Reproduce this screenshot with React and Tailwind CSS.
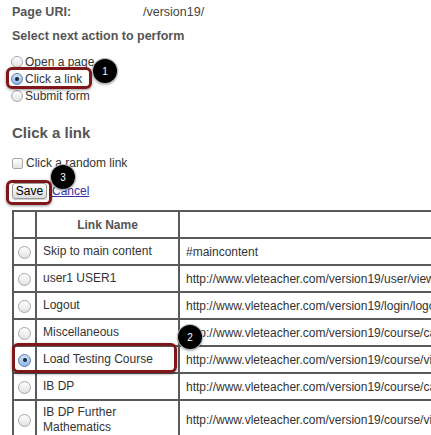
import React from "react";

const ROWS = [
  { name: "Skip to main content", url: "#maincontent" },
  { name: "user1 USER1", url: "http://www.vleteacher.com/version19/user/view.php?id=2" },
  { name: "Logout", url: "http://www.vleteacher.com/version19/login/logout.php" },
  { name: "Miscellaneous", url: "http://www.vleteacher.com/version19/course/category.php" },
  { name: "Load Testing Course", url: "http://www.vleteacher.com/version19/course/view.php", checked: true },
  { name: "IB DP", url: "http://www.vleteacher.com/version19/course/category.php" },
  { name: "IB DP Further Mathematics", url: "http://www.vleteacher.com/version19/course/view.php", tall: true },
];

function Radio({ checked, big }) {
  return (
    <span
      className={
        "inline-flex items-center justify-center rounded-full border shrink-0 " +
        (big ? "w-[13px] h-[13px] " : "w-[12px] h-[12px] ") +
        (checked
          ? "border-[#5a7fae] bg-gradient-to-b from-[#cfe2f8] to-[#8fb8e8]"
          : "border-[#a8a8a8] bg-gradient-to-b from-[#ffffff] to-[#e2e2e2]")
      }
    >
      {checked && <span className="w-[4px] h-[4px] rounded-full bg-[#1d2a3a]" />}
    </span>
  );
}

function Badge({ n, className }) {
  return (
    <div
      className={
        "absolute w-[24px] h-[24px] rounded-full bg-black text-white text-[10px] flex items-center justify-center shadow-[0_1px_3px_rgba(0,0,0,0.6)] ring-1 ring-[#bbb] " +
        className
      }
    >
      {n}
    </div>
  );
}

export default function App() {
  return (
    <div className="relative w-[431px] h-[435px] overflow-hidden bg-white font-['Liberation_Sans',Arial,sans-serif] text-[#333]">
      <div className="pl-[12px] pt-[4px]">
        <div className="flex h-[16px] items-center text-[12.5px] font-bold text-[#555]">
          <span className="w-[131px]">Page URI:</span>
          <span className="font-normal text-[#444]">/version19/</span>
        </div>
        <div className="mt-[8px] h-[16px] flex items-center text-[12.5px] font-bold text-[#555]">
          Select next action to perform
        </div>
        <div className="mt-[9px] flex flex-col text-[12px] text-[#333]">
          <label className="flex items-center gap-[2px] h-[17px] -ml-[1px]">
            <Radio /> Open a page
          </label>
          <label className="flex items-center gap-[2px] h-[17px] -ml-[1px]">
            <Radio checked /> Click a link
          </label>
          <label className="flex items-center gap-[2px] h-[17px] -ml-[1px]">
            <Radio /> Submit form
          </label>
        </div>
        <div className="mt-[19px] h-[20px] flex items-center text-[15px] font-bold text-[#555]">Click a link</div>
        <label className="mt-[12px] h-[16px] flex items-center gap-[3px] text-[12px]">
          <span className="w-[11px] h-[11px] rounded-[2px] border border-[#a8a8a8] bg-gradient-to-b from-white to-[#e4e4e4]" />
          Click a random link
        </label>
        <div className="mt-[11px] flex items-center gap-[5px] h-[17px]">
          <button className="h-[16px] w-[35px] text-[12px] leading-none text-black border border-[#9a9a9a] rounded-[3px] bg-gradient-to-b from-white to-[#dcdcdc] shadow-[0_1px_1px_rgba(0,0,0,0.2)]">
            Save
          </button>
          <a className="text-[12px] text-[#3b2fa2] underline">Cancel</a>
        </div>
      </div>

      <table className="absolute left-[12px] top-[210px] w-[560px] border-collapse text-[12px] text-[#333]">
        <thead>
          <tr className="h-[27px]">
            <th className="w-[23px] border-2 border-[#5a5a5a]" />
            <th className="w-[143px] border-2 border-[#5a5a5a] font-bold text-[#555]">Link Name</th>
            <th className="border-2 border-[#5a5a5a]" />
          </tr>
        </thead>
        <tbody>
          {ROWS.map((r) => (
            <tr key={r.name} className={r.tall ? "h-[40px]" : "h-[27px]"}>
              <td className="border-2 border-[#5a5a5a] text-center align-middle">
                <span className="inline-flex align-middle">
                  <Radio checked={r.checked} big />
                </span>
              </td>
              <td className="border-2 border-[#5a5a5a] pl-[6px] leading-[15px]">{r.name}</td>
              <td className="border-2 border-[#5a5a5a] pl-[6px] whitespace-nowrap">{r.url}</td>
            </tr>
          ))}
        </tbody>
      </table>

      <div className="absolute left-[6px] top-[67px] w-[86px] h-[22px] rounded-[6px] border-[3px] border-[#7e161a] shadow-[0_1px_3px_rgba(0,0,0,0.4)]" />
      <Badge n="1" className="left-[93px] top-[59px]" />

      <div className="absolute left-[6px] top-[180px] w-[46px] h-[25px] rounded-[6px] border-[3px] border-[#7e161a] shadow-[0_1px_3px_rgba(0,0,0,0.4)]" />
      <Badge n="3" className="left-[51px] top-[165px]" />

      <div className="absolute left-[12px] top-[343px] w-[165px] h-[30px] rounded-[6px] border-[3px] border-[#7e161a] shadow-[0_1px_3px_rgba(0,0,0,0.4)]" />
      <Badge n="2" className="left-[178px] top-[325px]" />
    </div>
  );
}
